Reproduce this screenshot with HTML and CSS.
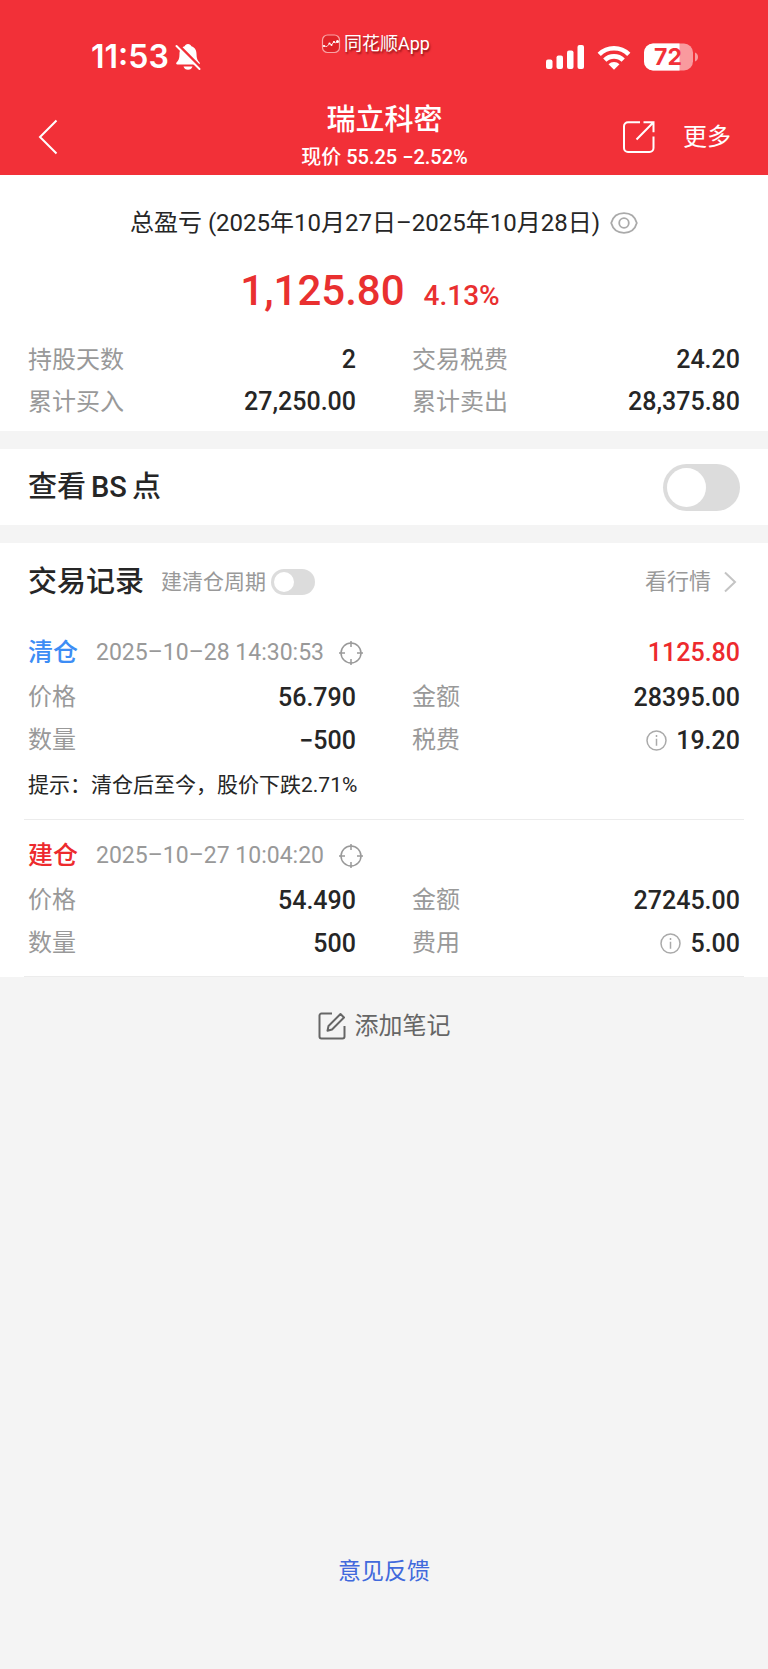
FILE: index.html
```html
<!DOCTYPE html>
<html lang="zh-CN">
<head>
<meta charset="utf-8">
<meta name="viewport" content="width=device-width, initial-scale=1">
<title>瑞立科密</title>
<link rel="stylesheet" href="styles.css">
</head>
<body>
<header class="header">
  <div class="status">
    <div class="status-left">
      <span class="clock">11:53</span>
      <svg class="bell" viewBox="0 0 26 28" width="26" height="28" aria-hidden="true">
        <path d="M13 1c1.700 0 3 1 3.400 2.300C20 4.500 21.500 7.500 21.500 11c0 4.500 1 6.500 3 8.500.700.800.300 2-.9 2H2.400c-1.200 0-1.600-1.200-.9-2 2-2 3-4 3-8.500 0-3.500 1.500-6.500 5.100-7.700C10 2 11.300 1 13 1z" fill="#fff"/>
        <path d="M8.500 23.500h9c-.5 2-2.300 3.300-4.500 3.300s-4-1.300-4.500-3.300z" fill="#fff"/>
        <path d="M2.500 1.200L26 24.800" stroke="#f23038" stroke-width="3"/>
        <path d="M1.500 3L24.500 26" stroke="#fff" stroke-width="2" stroke-linecap="round"/>
      </svg>
    </div>
    <div class="app-label">
      <svg viewBox="0 0 20 20" width="20" height="20" aria-hidden="true">
        <rect x="1.500" y="1" width="17" height="17.500" rx="5" fill="#e02329" stroke="#f9a3a5" stroke-width="1.200"/>
        <path d="M2.500 12l3.500.500 2.500-3 2 1.500 2.500-3.500 1.500 1.500 2.500-2" fill="none" stroke="#fff" stroke-width=".8"/>
        <circle cx="3" cy="12" r="1.100" fill="#fff"/><circle cx="8.500" cy="9.500" r="1.100" fill="#fff"/><circle cx="10.500" cy="11" r="1" fill="#fff"/><circle cx="13" cy="8" r="1.100" fill="#fff"/><circle cx="16.500" cy="7.500" r="1.500" fill="#fff"/>
      </svg>
      <span>同花顺App</span>
    </div>
    <div class="status-right">
      <svg viewBox="0 0 38 24" width="38" height="24" fill="#fff" aria-hidden="true">
        <rect x="0" y="14.500" width="6.500" height="9.500" rx="2"/><rect x="10.500" y="10.500" width="6.500" height="13.500" rx="2"/><rect x="21" y="5.500" width="6.500" height="18.500" rx="2"/><rect x="31.500" y="0" width="6.500" height="24" rx="2"/>
      </svg>
      <svg viewBox="0 0 34 25" width="34" height="25" aria-hidden="true">
        <g fill="none" stroke="#fff" stroke-width="4.600"><path d="M2.200 9.300a21 21 0 0 1 29.600 0"/><path d="M7.800 15.200a13 13 0 0 1 18.400 0"/></g>
        <path d="M11.500 19.300a8 8 0 0 1 11 0L17 24.800z" fill="#fff"/>
      </svg>
      <svg class="battery" viewBox="0 0 54 28" width="54" height="28" aria-label="72%" role="img">
        <rect x="0" y="0.500" width="49" height="27" rx="9" fill="#f99a9e"/>
        <path d="M9 .5h26.500v27H9a9 9 0 0 1-9-9v-9a9 9 0 0 1 9-9z" fill="#fff"/>
        <path d="M51 9.500c4 1.500 4 7.500 0 9z" fill="#f99a9e"/>
        <text x="24" y="22" text-anchor="middle" class="battery-text">72</text>
      </svg>
    </div>
  </div>
  <nav class="nav">
    <button class="icon-button back" aria-label="返回">
      <svg viewBox="0 0 20 36" width="20" height="36"><path d="M18.500 1.500L2 18l16.500 16.500" fill="none" stroke="#fff" stroke-width="2"/></svg>
    </button>
    <div class="title-block">
      <h1 class="title">瑞立科密</h1>
      <p class="subtitle">现价 55.25 −2.52%</p>
    </div>
    <div class="nav-actions">
      <button class="icon-button" aria-label="分享">
        <svg viewBox="0 0 32 32" width="32" height="32"><path d="M17 1.200H5A4 4 0 0 0 1 5.200V27a4 4 0 0 0 4 4h21.500a4 4 0 0 0 4-4V15.500M20.500 1.200h10v10M30 1.700L13.500 18.500" fill="none" stroke="#fff" stroke-width="2"/></svg>
      </button>
      <button class="more">更多</button>
    </div>
  </nav>
</header>

<main>
  <section class="panel summary">
    <div class="period">
      <span>总盈亏 (2025年10月27日–2025年10月28日)</span>
      <button class="icon-button" aria-label="显示金额">
        <svg viewBox="0 0 28 22" width="28" height="22" fill="none" stroke="#aaa" stroke-width="1.800"><path d="M1.200 11C3 4.500 8 1.200 14 1.200S25 4.500 26.800 11C25 17.500 20 20.800 14 20.800S3 17.500 1.200 11z"/><circle cx="14" cy="11" r="4.800"/></svg>
      </button>
    </div>
    <div class="profit"><strong class="profit-value">1,125.80</strong><span class="profit-rate">4.13%</span></div>
    <dl class="stats">
      <div class="row"><dt>持股天数</dt><dd>2</dd></div>
      <div class="row"><dt>交易税费</dt><dd>24.20</dd></div>
      <div class="row"><dt>累计买入</dt><dd>27,250.00</dd></div>
      <div class="row"><dt>累计卖出</dt><dd>28,375.80</dd></div>
    </dl>
  </section>

  <section class="panel bs">
    <label class="heading" for="bs">查看<span class="latin">BS</span>点</label>
    <input class="switch" type="checkbox" id="bs">
  </section>

  <section class="panel records">
    <div class="records-head">
      <h2 class="heading">交易记录</h2>
      <label class="cycle" for="cycle">建清仓周期</label>
      <input class="switch small" type="checkbox" id="cycle">
      <a class="quote" href="#">看行情
        <svg viewBox="0 0 14 22" width="14" height="22" aria-hidden="true"><path d="M2 1.500L12 11 2 20.500" fill="none" stroke="#c4c4c4" stroke-width="2"/></svg>
      </a>
    </div>

    <article class="record">
      <div class="record-head">
        <span class="tag sell">清仓</span>
        <time class="time">2025–10–28 14:30:53</time>
        <svg class="target" viewBox="0 0 24 24" width="24" height="24" fill="none" stroke="#999" stroke-width="1.500" aria-hidden="true"><circle cx="12" cy="12" r="10"/><path d="M12 0v6M12 18v6M0 12h6M18 12h6"/></svg>
        <span class="gain">1125.80</span>
      </div>
      <dl class="stats trade">
        <div class="row"><dt>价格</dt><dd>56.790</dd></div>
        <div class="row"><dt>金额</dt><dd>28395.00</dd></div>
        <div class="row"><dt>数量</dt><dd>−500</dd></div>
        <div class="row"><dt>税费</dt><dd><svg class="info" viewBox="0 0 21 21" width="21" height="21" aria-hidden="true"><circle cx="10.500" cy="10.500" r="9.500"/><path d="M10.500 8.800v7M10.500 5v2"/></svg>19.20</dd></div>
      </dl>
      <p class="tip">提示：清仓后至今，股价下跌2.71%</p>
    </article>

    <article class="record">
      <div class="record-head">
        <span class="tag buy">建仓</span>
        <time class="time">2025–10–27 10:04:20</time>
        <svg class="target" viewBox="0 0 24 24" width="24" height="24" fill="none" stroke="#999" stroke-width="1.500" aria-hidden="true"><circle cx="12" cy="12" r="10"/><path d="M12 0v6M12 18v6M0 12h6M18 12h6"/></svg>
      </div>
      <dl class="stats trade">
        <div class="row"><dt>价格</dt><dd>54.490</dd></div>
        <div class="row"><dt>金额</dt><dd>27245.00</dd></div>
        <div class="row"><dt>数量</dt><dd>500</dd></div>
        <div class="row"><dt>费用</dt><dd><svg class="info" viewBox="0 0 21 21" width="21" height="21" aria-hidden="true"><circle cx="10.500" cy="10.500" r="9.500"/><path d="M10.500 8.800v7M10.500 5v2"/></svg>5.00</dd></div>
      </dl>
    </article>
  </section>

  <button class="note">
    <svg viewBox="0 0 28 28" width="28" height="28" fill="none" stroke="#666" stroke-width="2" aria-hidden="true"><path d="M14 1.500H3.500A2 2 0 0 0 1.500 3.500v21a2 2 0 0 0 2 2h21a2 2 0 0 0 2-2V14"/><path d="M9.500 18.700l1-4.700L22.500 2l3.500 3.500-12 12z" stroke-linejoin="round"/></svg>
    <span>添加笔记</span>
  </button>
</main>

<footer class="footer"><a class="feedback" href="#">意见反馈</a></footer>
</body>
</html>
```
FILE: styles.css
```css
* { box-sizing: border-box; }

body {
  margin: 0;
  min-height: 100vh;
  display: flex;
  flex-direction: column;
  background: #f4f4f4;
  color: #262626;
  font: 24px/42px Roboto, "Noto Sans CJK SC", sans-serif;
}

h1, h2, p, dl, dd { margin: 0; }

button {
  margin: 0;
  padding: 0;
  border: 0;
  background: none;
  color: inherit;
  font: inherit;
}

a { text-decoration: none; }
svg { display: block; flex: none; }
.icon-button { display: flex; }

.header { background: #f23038; color: #fff; }

.status {
  display: grid;
  grid-template-columns: 230px auto 1fr;
  align-items: end;
  padding: 32px 70px 0 91px;
}

.status-left, .status-right {
  display: flex;
  align-items: center;
  height: 36px;
}

.status-left { gap: 6px; }
.status-right { justify-content: flex-end; gap: 13px; }
.clock { font: 600 32px/36px Inter, sans-serif; }

.battery-text {
  font: 700 23px Inter, sans-serif;
  fill: #f23038;
}

.app-label {
  display: flex;
  align-items: center;
  gap: 3px;
  height: 43px;
  padding-bottom: 19px;
  font-size: 18px;
  line-height: 24px;
  text-shadow: 1px 2px 2px rgba(80, 0, 0, .6);
}

.nav {
  display: grid;
  grid-template-columns: 1fr auto 1fr;
  align-items: center;
  padding: 27px 37px 4px 38px;
}

.title-block { text-align: center; }
.title { font-size: 29px; font-weight: 500; line-height: 36px; }
.subtitle { padding-top: 5px; font-size: 20px; font-weight: 500; line-height: 28px; }

.nav-actions {
  display: flex;
  align-items: center;
  justify-content: flex-end;
  gap: 28px;
}

.panel {
  padding: 0 28px;
  margin-bottom: 18px;
  background: #fff;
}

.summary { padding-top: 27px; padding-bottom: 8px; }

.period {
  display: flex;
  align-items: center;
  justify-content: center;
  gap: 10px;
}

.profit {
  display: flex;
  align-items: baseline;
  justify-content: center;
  gap: 19px;
  padding: 19px 28px 15px 0;
  color: #e93030;
  line-height: 56px;
}

.profit-value { font-size: 42px; font-weight: 500; }
.profit-rate { font-size: 28px; font-weight: 500; }

.stats {
  display: grid;
  grid-template-columns: 1fr 1fr;
  column-gap: 56px;
}

.row { display: flex; justify-content: space-between; }
dt { color: #999; }
dd { display: flex; align-items: center; gap: 9px; font-size: 25px; font-weight: 500; }

.heading { font-size: 29px; font-weight: 500; }
.latin { margin: 0 5px; }

.bs {
  display: flex;
  align-items: center;
  justify-content: space-between;
  height: 76px;
}

.switch {
  appearance: none;
  width: 77px;
  height: 47px;
  margin: 0;
  padding: 4px;
  border-radius: 24px;
  background: #dcdcdc;
}

.switch::before {
  content: "";
  display: block;
  height: 100%;
  aspect-ratio: 1;
  border-radius: 50%;
  background: #fff;
}

.switch:checked { background: #e93030; }
.switch:checked::before { margin-left: auto; }
.small { width: 44px; height: 26px; padding: 3px; }

.records { padding: 18px 24px 0; margin-bottom: 0; }

.records-head {
  display: flex;
  align-items: center;
  padding: 0 4px 27px;
}

.cycle { margin: 0 5px 0 17px; color: #999; font-size: 21px; }

.quote {
  display: flex;
  align-items: center;
  gap: 12px;
  margin-left: auto;
  padding-right: 3px;
  color: #999;
  font-size: 22px;
}

.record { border-bottom: 1px solid #ececec; padding: 0 4px 11px; }
.record + .record { padding-top: 13px; }

.record-head { display: flex; align-items: center; line-height: 46px; }
.tag { font-size: 25px; font-weight: 500; }
.sell { color: #3d8df5; }
.buy { color: #ed2a2d; }
.time { margin: 0 15px 0 18px; color: #999; font-size: 23px; }
.gain { margin-left: auto; color: #ed2a2d; font-size: 25px; font-weight: 500; }
.trade { line-height: 43px; }
.info { fill: none; stroke: #aaa; stroke-width: 1.5px; }
.tip { font-size: 21px; line-height: 46px; }

.note {
  display: flex;
  align-items: center;
  justify-content: center;
  gap: 9px;
  width: 100%;
  padding-top: 28px;
  color: #666;
}

.footer { margin-top: auto; padding-bottom: 76px; text-align: center; }
.feedback { color: #4169dc; font-size: 23px; }
```
